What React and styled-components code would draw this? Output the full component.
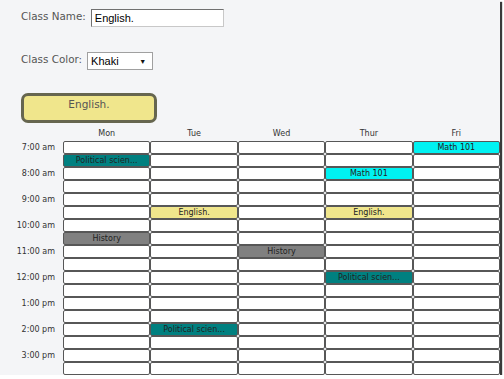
import React from 'react';
import styled, { createGlobalStyle } from 'styled-components';

const GlobalStyle = createGlobalStyle`
  body {
    margin: 0;
    background: #ffffff;
  }
`;

const Frame = styled.div`
  width: 500px;
  height: 375px;
  background: #f4f5f7;
  box-shadow: 2px 2px 1px #3a3a3a;
  overflow: hidden;
  font-family: "DejaVu Sans", Verdana, sans-serif;
`;

const Form = styled.div`
  padding: 9px 0 0 21px;
  display: flex;
  flex-direction: column;
  align-items: flex-start;
`;

const Field = styled.div`
  display: flex;
  align-items: flex-start;
  gap: ${p => p.gap || 5}px;
  margin-top: ${p => p.top || 0}px;
`;

const Label = styled.span`
  font-size: 10.4px;
  color: #555;
  line-height: 14px;
`;

const TextInput = styled.input`
  width: 133px;
  height: 18px;
  box-sizing: border-box;
  border: 1px solid #c8c8c8;
  border-top-color: #707070;
  border-left-color: #707070;
  background: #fff;
  padding: 1px 3px;
  font-family: "Liberation Sans", Arial, sans-serif;
  font-size: 11px;
  color: #000;
  outline: none;
`;

const SelectBox = styled.div`
  width: 66px;
  height: 18px;
  box-sizing: border-box;
  border: 1px solid #a0a0a0;
  background: #fff;
  display: flex;
  align-items: center;
  justify-content: space-between;
  padding: 0 6px 0 3px;
  font-family: "Liberation Sans", Arial, sans-serif;
  font-size: 11px;
  color: #000;
`;

const Caret = styled.span`
  font-size: 7px;
  color: #111;
`;

const Preview = styled.div`
  margin-top: 23px;
  width: 136px;
  height: 30px;
  box-sizing: border-box;
  border: 3px solid #66664f;
  border-radius: 7px;
  background: #f0e68c;
  color: #555;
  font-size: 10.5px;
  text-align: center;
  padding-top: 2px;
`;

const HeaderRow = styled.div`
  display: grid;
  grid-template-columns: 63px repeat(5, 1fr);
  height: 14px;
  margin-top: 4px;
`;

const DayName = styled.div`
  font-size: 8px;
  color: #333;
  text-align: center;
  line-height: 14px;
`;

const Board = styled.div`
  display: grid;
  grid-template-columns: 63px repeat(5, 1fr);
  grid-auto-rows: 13px;
`;

const TimeLabel = styled.div`
  font-size: 8px;
  color: #333;
  text-align: right;
  padding-right: 8px;
  line-height: 13px;
`;

const Cell = styled.div`
  box-sizing: border-box;
  border: 1px solid #575757;
  border-radius: 2px;
  background: ${p => p.bg || '#fff'};
  font-size: 8px;
  color: #222;
  text-align: center;
  line-height: 11px;
  white-space: nowrap;
  overflow: hidden;
`;

const days = ['Mon', 'Tue', 'Wed', 'Thur', 'Fri'];
const times = ['7:00 am', '8:00 am', '9:00 am', '10:00 am', '11:00 am', '12:00 pm', '1:00 pm', '2:00 pm', '3:00 pm'];

const colors = {
  teal: '#008080',
  gray: '#808080',
  cyan: '#00f2f2',
  khaki: '#f0e68c',
};

const events = {
  '0-1': { name: 'Political scien...', color: colors.teal },
  '0-7': { name: 'History', color: colors.gray },
  '1-5': { name: 'English.', color: colors.khaki },
  '1-14': { name: 'Political scien...', color: colors.teal },
  '2-8': { name: 'History', color: colors.gray },
  '3-2': { name: 'Math 101', color: colors.cyan },
  '3-5': { name: 'English.', color: colors.khaki },
  '3-10': { name: 'Political scien...', color: colors.teal },
  '4-0': { name: 'Math 101', color: colors.cyan },
};

function App() {
  const rows = [];
  for (let r = 0; r < 18; r++) {
    rows.push(
      <TimeLabel key={'t' + r}>{r % 2 === 0 ? times[r / 2] : ''}</TimeLabel>
    );
    days.forEach((d, i) => {
      const ev = events[`${i}-${r}`];
      rows.push(
        <Cell key={d + r} bg={ev && ev.color}>{ev ? ev.name : ''}</Cell>
      );
    });
  }

  return (
    <Frame>
      <GlobalStyle />
      <Form>
        <Field gap={5}>
          <Label>Class Name:</Label>
          <TextInput defaultValue="English." readOnly />
        </Field>
        <Field gap={5} top={25}>
          <Label>Class Color:</Label>
          <SelectBox>
            <span>Khaki</span>
            <Caret>▼</Caret>
          </SelectBox>
        </Field>
        <Preview>English.</Preview>
      </Form>
      <HeaderRow>
        <span />
        {days.map(d => <DayName key={d}>{d}</DayName>)}
      </HeaderRow>
      <Board>{rows}</Board>
    </Frame>
  );
}

export default App;
